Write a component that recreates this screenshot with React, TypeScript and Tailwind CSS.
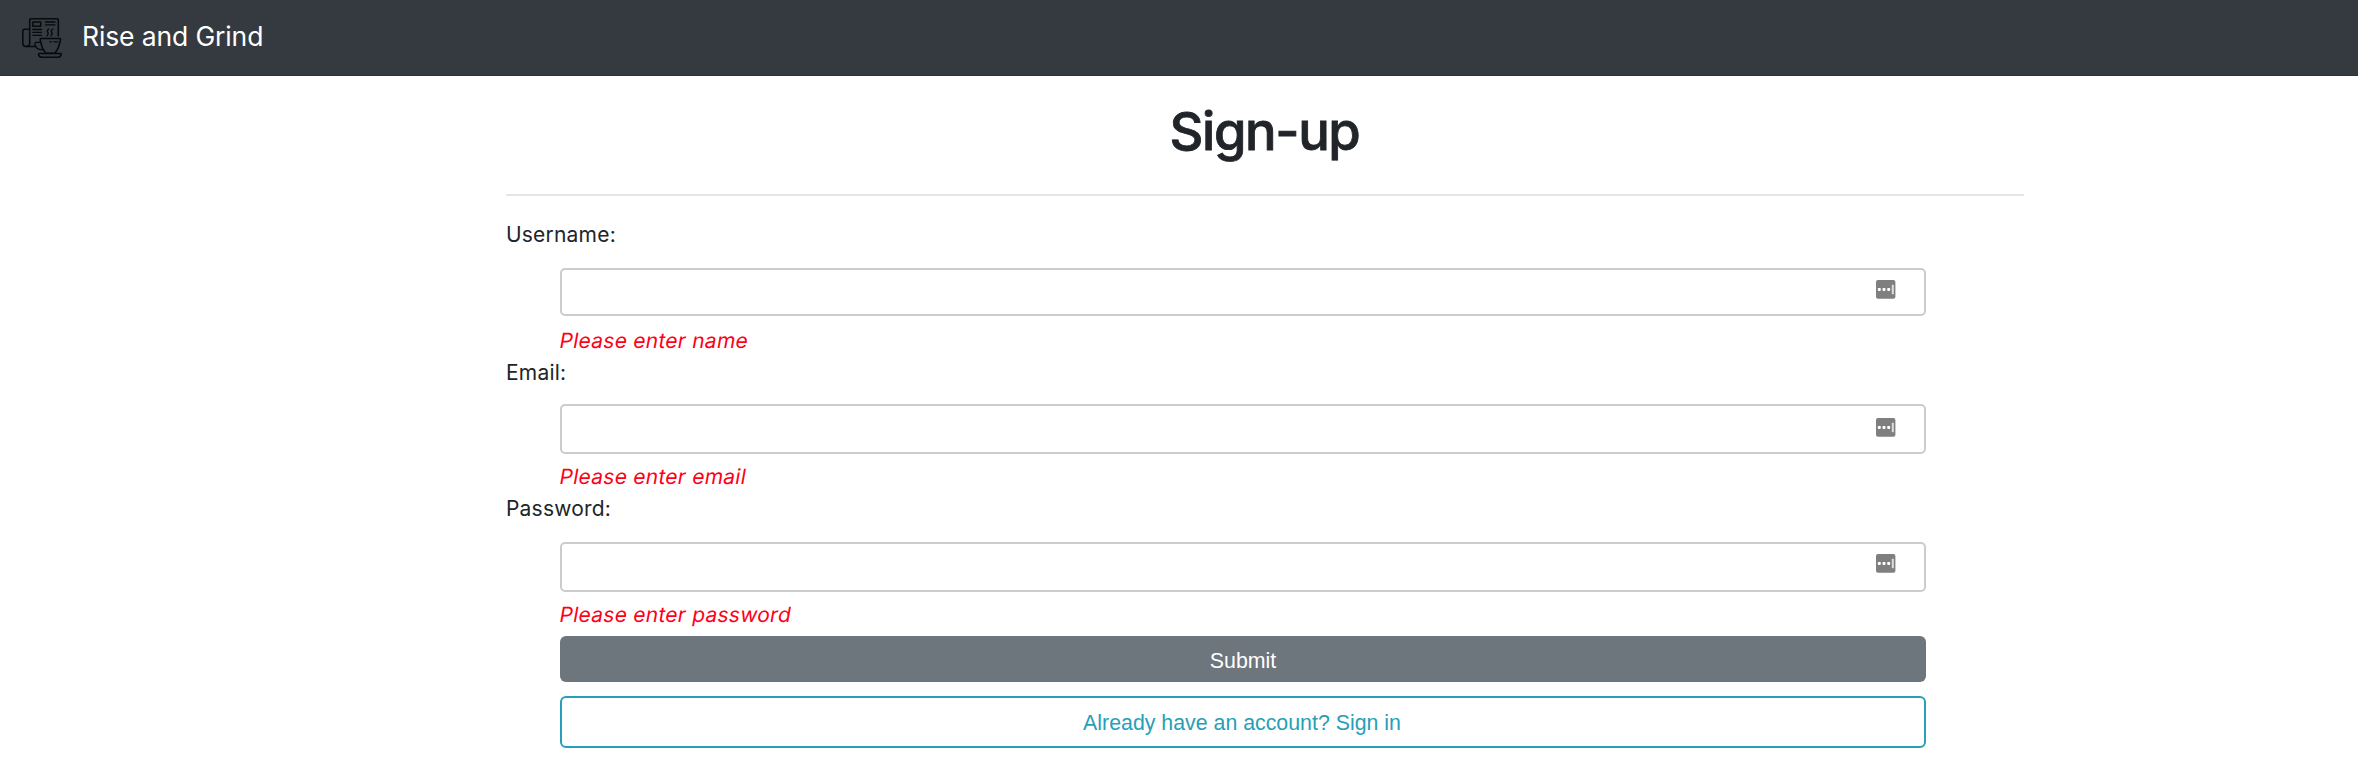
import React from "react";

function Logo() {
  return (
    <svg
      width="40"
      height="40"
      viewBox="0 0 40 40"
      fill="none"
      stroke="#08090a"
      strokeWidth="1.55"
      strokeLinecap="round"
      strokeLinejoin="round"
      className="shrink-0"
    >
      <path d="M36.3 17.7V2Q36.3 .8 35 .8H9Q7.7 .8 7.7 2V25Q7.7 28.4 4.2 28.4Q.8 28.4 .8 25V13Q.8 11.2 2.5 11.2H7.5" />
      <path d="M4.2 28.4H13" />
      <rect x="10.9" y="3.9" width="7.8" height="4.4" />
      <path d="M23.5 4H33M23.5 6.9H33M10.8 11.5H19.5M10.8 14.4H19.5M10.8 17.3H19.5" strokeWidth="1.3" />
      <path d="M26.8 11Q24.4 12.8 25.7 14.3T25 17.8M30.8 11Q28.4 12.8 29.7 14.3T29 17.8" strokeWidth="1.3" />
      <path d="M19.2 20.4H37.6Q38.8 20.4 38.5 21.6L37.7 25.5Q36.5 30.5 33 35.2H23.8Q20.2 31.5 19 25.5L18.2 21.6Q18 20.4 19.2 20.4Z" />
      <path d="M18.7 24.4H14.5Q12.6 24.4 12.9 26.4Q13.8 31.8 20.8 31.8M32 23.8H36M28 23.8H29.5" strokeWidth="1.3" />
      <path d="M17.2 35.5H38.7Q39.3 35.5 39.2 36.2Q38.8 39.2 36 39.2H20Q17 39.2 16.5 36.3Q16.5 35.5 17.2 35.5Z" />
    </svg>
  );
}

function PasswordManagerIcon() {
  return (
    <svg width="20" height="19" viewBox="0 0 20 19" className="shrink-0">
      <rect x="0" y="0" width="19.4" height="18.7" rx="2" fill="#7f7f7f" />
      <rect x="1.8" y="7.9" width="3" height="3" rx=".8" fill="#fff" />
      <rect x="6.5" y="7.9" width="3" height="3" rx=".8" fill="#fff" />
      <rect x="11.2" y="7.9" width="3" height="3" rx=".8" fill="#fff" />
      <rect x="15.8" y="4.8" width="2" height="9.4" fill="#dedede" />
    </svg>
  );
}

interface FieldProps {
  label: string;
  error: string;
  labelClass: string;
  boxClass: string;
  errorClass: string;
}

function Field({ label, error, labelClass, boxClass, errorClass }: FieldProps) {
  return (
    <div>
      <div className={`text-[21px] leading-8 tracking-[0.2px] ${labelClass}`}>{label}</div>
      <div className={`ml-[54px] flex w-[1366px] items-start justify-end rounded-[5px] border-2 border-[#ccc] bg-white pr-[28px] ${boxClass}`}>
        <PasswordManagerIcon />
      </div>
      <div className={`ml-[51px] w-fit origin-bottom-left -skew-x-[10deg] text-[21px] leading-8 tracking-[0.25px] text-[#ff0017] ${errorClass}`}>{error}</div>
    </div>
  );
}

export default function App() {
  return (
    <div className="h-[770px] overflow-hidden bg-white font-['Inter',sans-serif] text-[#212529]">
      <nav className="flex h-[76px] items-center border-b border-[#2d3138] bg-[#353a40] pl-[22px]">
        <Logo />
        <span className="ml-[20px] pb-[3px] text-[26.5px] leading-10 tracking-[-0.13px] text-white">Rise and Grind</span>
      </nav>
      <main className="ml-[506px] w-[1518px]">
        <h1 className="h-[118px] pt-[23px] pr-px text-center text-[52.5px] leading-[64px] font-medium tracking-[-1.4px] [-webkit-text-stroke:0.8px_#212529]">Sign-up</h1>
        <div className="h-0.5 bg-[#e5e5e5]" />
        <Field label="Username:" error="Please enter name" labelClass="mt-[23px]" boxClass="mt-[17px] h-[48px] pt-[10px]" errorClass="mt-[9px]" />
        <Field label="Email:" error="Please enter email" labelClass="" boxClass="mt-[15px] h-[50px] pt-[12px]" errorClass="mt-[7px]" />
        <Field label="Password:" error="Please enter password" labelClass="" boxClass="mt-[17px] h-[50px] pt-[10px]" errorClass="mt-[7px]" />
        <div className="ml-[54px] flex w-[1366px] flex-col font-['Liberation_Sans',sans-serif] text-[21.33px]">
          <button className="mt-[5px] h-[46px] rounded-[6px] bg-[#6d757d] pt-[5px] text-white">Submit</button>
          <button className="mt-[14px] h-[52px] rounded-[6px] border-2 border-[#26a0b8] bg-white pt-[3px] pr-[2px] text-[#26a0b8]">Already have an account? Sign in</button>
        </div>
      </main>
    </div>
  );
}
